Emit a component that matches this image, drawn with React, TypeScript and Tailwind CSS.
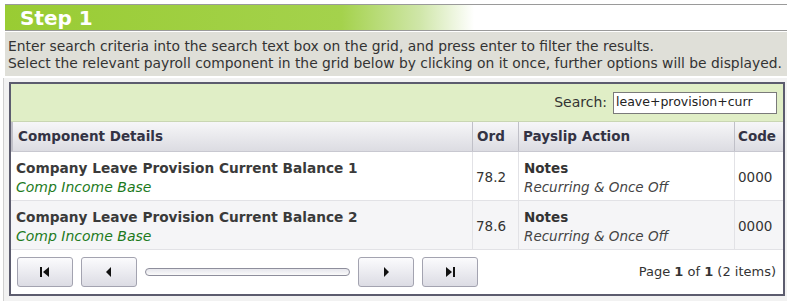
import { ReactNode } from "react"

const rows = [
  { name: "Company Leave Provision Current Balance 1", ord: "78.2", alt: false },
  { name: "Company Leave Provision Current Balance 2", ord: "78.6", alt: true },
]

function PagerButton({ children }: { children: ReactNode }) {
  return (
    <div className="w-[56px] h-[30px] flex items-center justify-center rounded-[3px] border border-[#a3a3b0] bg-gradient-to-b from-[#fbfbfd] to-[#dcdce4]">
      {children}
    </div>
  )
}

export default function App() {
  return (
    <div className="w-[787px] h-[301px] bg-white overflow-hidden font-['DejaVu_Sans',sans-serif] text-[13.5px] text-[#333]">
      {/* Step header */}
      <div className="mt-[4px] ml-[5px] h-[27px] border-y border-[#9a9a9a] bg-[linear-gradient(to_right,#99cc33_0%,#a4d24c_43%,#cfe6a8_53%,#ffffff_60%)] flex items-center">
        <span className="pl-[15px] text-[20px] font-bold text-white leading-none">Step 1</span>
      </div>

      {/* Instructions */}
      <div className="mt-[1px] ml-[5px] h-[44px] bg-[#dfdfd8] px-[3px] pt-[6px] leading-[17px] text-[13.85px] whitespace-nowrap text-[#333]">
        <div>Enter search criteria into the search text box on the grid, and press enter to filter the results.</div>
        <div>Select the relevant payroll component in the grid below by clicking on it once, further options will be displayed.</div>
      </div>

      {/* Grid area */}
      <div className="mt-[2px] ml-[3px] h-[226px] border-l border-[#d0d0d0] bg-[#f2f2f2] pl-[5px] pr-[2px] pt-[4px]">
        <div className="w-[776px] border-2 border-[#5c5c6e] bg-white">
          {/* Toolbar */}
          <div className="h-[38px] bg-[#e0eec6] border-b border-[#c9d6b3] flex items-center justify-end pr-[6px] gap-[6px]">
            <span className="text-[#333] text-[14px]">Search:</span>
            <div className="w-[164px] h-[22px] border border-[#7a7a7a] bg-white flex items-center px-[2px] text-[12.5px] text-[#222]">
              leave+provision+curr
            </div>
          </div>

          {/* Header */}
          <div className="grid grid-cols-[461px_46px_216px_49px] h-[30px] bg-gradient-to-b from-[#f6f6f8] to-[#dcdce2] border-b border-[#c8c8d0] font-bold text-[#333344]">
            <div className="flex items-center pl-[5px] border-l-2 border-[#c0c0c8]">Component Details</div>
            <div className="flex items-center pl-[4px] border-l border-[#c0c0c8]">Ord</div>
            <div className="flex items-center pl-[4px] border-l border-[#c0c0c8]">Payslip Action</div>
            <div className="flex items-center pl-[3px] border-l border-[#c0c0c8]">Code</div>
          </div>

          {/* Rows */}
          {rows.map((r) => (
            <div
              key={r.name}
              className={`grid grid-cols-[461px_46px_216px_49px] h-[49px] border-b border-[#e2e2e6] ${r.alt ? "bg-[#f5f5f7]" : "bg-white"}`}
            >
              <div className="flex flex-col justify-center pl-[5px] pt-[4px] leading-[19px]">
                <span className="font-bold text-[13.7px] text-[#3a3a3a]">{r.name}</span>
                <span className="italic text-[14px] text-[#1d7a1d]">Comp Income Base</span>
              </div>
              <div className="flex items-center pl-[3px] pt-[3px] border-l border-[#e2e2e6]">{r.ord}</div>
              <div className="flex flex-col justify-center pl-[5px] pt-[4px] border-l border-[#e2e2e6] leading-[19px]">
                <span className="font-bold text-[#333]">Notes</span>
                <span className="italic text-[#444]">Recurring &amp; Once Off</span>
              </div>
              <div className="flex items-center pl-[3px] pt-[3px] border-l border-[#e2e2e6]">0000</div>
            </div>
          ))}

          {/* Pager */}
          <div className="h-[44px] flex items-center pl-[6px] pr-[7px] gap-[8px]">
            <PagerButton>
              <svg width="12" height="12" viewBox="0 0 12 12">
                <rect x="1" y="1" width="2" height="10" fill="#111" />
                <polygon points="10,1 4,6 10,11" fill="#111" />
              </svg>
            </PagerButton>
            <PagerButton>
              <svg width="12" height="12" viewBox="0 0 12 12">
                <polygon points="8,1 3,6 8,11" fill="#111" />
              </svg>
            </PagerButton>
            <div className="w-[205px] h-[8px] rounded-full border border-[#8e8e9c] bg-gradient-to-b from-[#e6e6ec] to-[#fafafa]" />
            <PagerButton>
              <svg width="12" height="12" viewBox="0 0 12 12">
                <polygon points="4,1 9,6 4,11" fill="#111" />
              </svg>
            </PagerButton>
            <PagerButton>
              <svg width="12" height="12" viewBox="0 0 12 12">
                <polygon points="2,1 8,6 2,11" fill="#111" />
                <rect x="9" y="1" width="2" height="10" fill="#111" />
              </svg>
            </PagerButton>
            <div className="ml-auto text-[13px] text-[#333]">
              Page <b>1</b> of <b>1</b> (2 items)
            </div>
          </div>
        </div>
      </div>
    </div>
  )
}
